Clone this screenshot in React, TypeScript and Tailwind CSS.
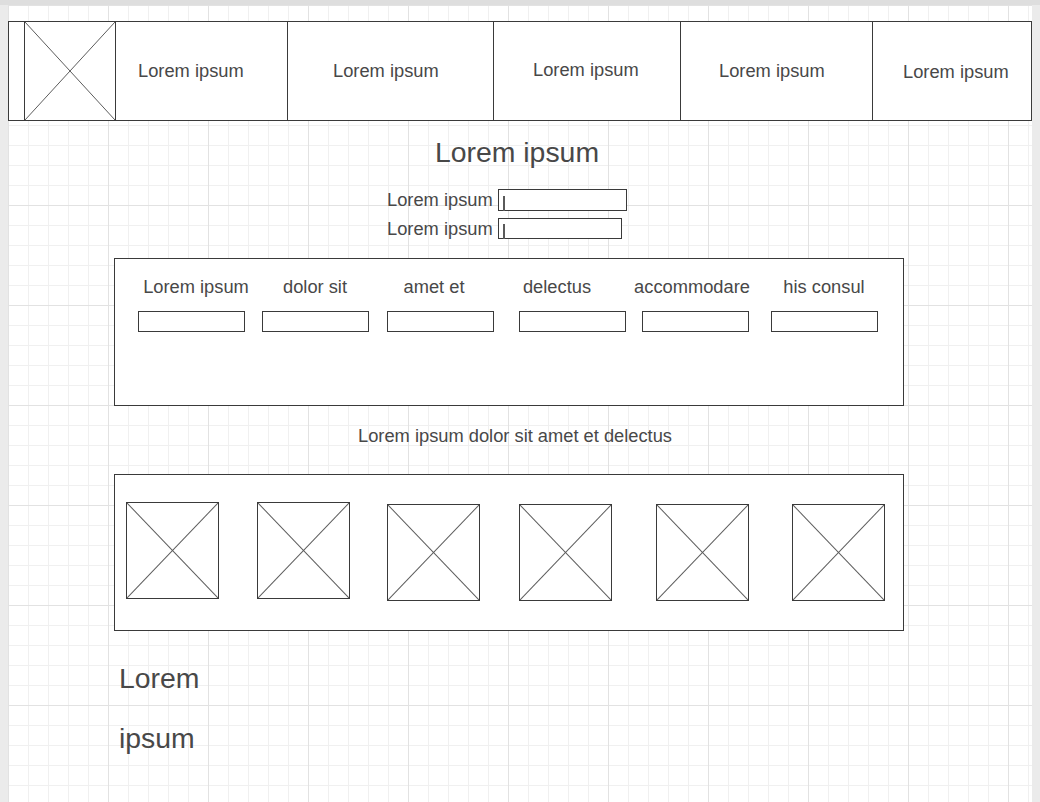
import React from 'react';

const navItems = [
  { label: 'Lorem ipsum', w: 'w-[172px]', pad: 'pl-[22px]' },
  { label: 'Lorem ipsum', w: 'w-[206px]', pad: 'pl-[45px]' },
  { label: 'Lorem ipsum', w: 'w-[187px]', pad: 'pl-[39px] pb-[2px]' },
  { label: 'Lorem ipsum', w: 'w-[192px]', pad: 'pl-[38px]' },
];

const columns = [
  { label: 'Lorem ipsum', lm: 'ml-[23px]', im: 'ml-[23px]' },
  { label: 'dolor sit', lm: 'ml-[3px]', im: 'ml-[17px]' },
  { label: 'amet et', lm: 'ml-[3px]', im: 'ml-[18px]' },
  { label: 'delectus', lm: 'ml-[7px]', im: 'ml-[25px]' },
  { label: 'accommodare', lm: 'ml-[19px]', im: 'ml-[16px]' },
  { label: 'his consul', lm: 'ml-[16px]', im: 'ml-[22px]' },
];

const pictures = [
  'ml-[11px] mt-[27px]',
  'ml-[38px] mt-[27px]',
  'ml-[37px] mt-[29px]',
  'ml-[39px] mt-[29px]',
  'ml-[44px] mt-[29px]',
  'ml-[43px] mt-[29px]',
];

// croix du placeholder d'image
const Cross = () => (
  <svg className="w-full h-full block" viewBox="0 0 100 100" preserveAspectRatio="none">
    <line x1="0" y1="0" x2="100" y2="100" stroke="#5c5c5c" strokeWidth="1" vectorEffect="non-scaling-stroke" />
    <line x1="100" y1="0" x2="0" y2="100" stroke="#5c5c5c" strokeWidth="1" vectorEffect="non-scaling-stroke" />
  </svg>
);

const Field = ({ w, h }: { w: string; h: string }) => (
  <div className={`${w} ${h} border border-[#3a3a3a] bg-white flex items-end pl-[4px] shrink-0`}>
    <span className="w-[2px] h-[15px] bg-[#5a5a5a] translate-y-[1px]" />
  </div>
);

const App = () => {
  return (
    <div className="min-h-screen bg-[#ebebeb] font-['Liberation_Sans',Arial,sans-serif] text-[#484848]">
      <div className="h-[5px] bg-[#dedede]" />
      <div className="ml-[8px] w-[1024px] min-h-[797px] bg-white [background-image:linear-gradient(to_right,#e2e2e2_1px,transparent_1px),linear-gradient(to_bottom,#e2e2e2_1px,transparent_1px),linear-gradient(to_right,#f0f0f0_1px,transparent_1px),linear-gradient(to_bottom,#f0f0f0_1px,transparent_1px)] [background-size:100px_100px,100px_100px,20px_20px,20px_20px] overflow-hidden">
        {/* Barre de navigation */}
        <div className="mt-4 h-[100px] flex border border-[#3a3a3a] bg-white">
          <div className="w-[16px] border-r border-[#3a3a3a] shrink-0" />
          <div className="w-[91px] border-r border-[#3a3a3a] shrink-0">
            <Cross />
          </div>
          {navItems.map((item, i) => (
            <div
              key={i}
              className={`${item.w} ${item.pad} border-r border-[#3a3a3a] shrink-0 flex items-center text-[18.3px] leading-[22px] whitespace-nowrap`}
            >
              {item.label}
            </div>
          ))}
          <div className="flex-1 pl-[30px] pt-[2px] flex items-center text-[18.3px] leading-[22px] whitespace-nowrap">
            Lorem ipsum
          </div>
        </div>

        {/* Titre */}
        <div className="mt-[15px] pr-[6px] text-center text-[28.4px] leading-[32px]">Lorem ipsum</div>

        {/* Formulaire */}
        <div className="mt-[21px] ml-[379px] flex flex-col gap-[7px]">
          <div className="flex items-center h-[22px]">
            <span className="w-[106px] text-[18.3px] leading-[22px] whitespace-nowrap">Lorem ipsum</span>
            <div className="ml-[5px]">
              <Field w="w-[129px]" h="h-[22px]" />
            </div>
          </div>
          <div className="flex items-center h-[21px]">
            <span className="w-[106px] text-[18.3px] leading-[22px] whitespace-nowrap">Lorem ipsum</span>
            <div className="ml-[5px]">
              <Field w="w-[124px]" h="h-[21px]" />
            </div>
          </div>
        </div>

        {/* Tableau des champs */}
        <div className="mt-[19px] ml-[106px] w-[790px] h-[148px] border border-[#3a3a3a] bg-white pt-[17px]">
          <div className="flex">
            {columns.map((c, i) => (
              <div key={i} className={`${c.lm} w-[116px] shrink-0 text-center text-[18.3px] leading-[22px] whitespace-nowrap`}>
                {c.label}
              </div>
            ))}
          </div>
          <div className="flex mt-[13px]">
            {columns.map((c, i) => (
              <div key={i} className={`${c.im} w-[107px] h-[21px] shrink-0 border border-[#3a3a3a] bg-white`} />
            ))}
          </div>
        </div>

        <div className="mt-[19px] pr-[10px] text-center text-[18.3px] leading-[22px]">
          Lorem ipsum dolor sit amet et delectus
        </div>

        {/* Galerie */}
        <div className="mt-[27px] ml-[106px] w-[790px] h-[157px] border border-[#3a3a3a] bg-white flex items-start">
          {pictures.map((p, i) => (
            <div key={i} className={`${p} w-[93px] h-[97px] shrink-0 border border-[#3a3a3a]`}>
              <Cross />
            </div>
          ))}
        </div>

        <div className="mt-[31px] ml-[111px] text-[28.4px] leading-[32px]">Lorem</div>
        <div className="mt-[28px] ml-[111px] text-[28.4px] leading-[32px]">ipsum</div>
      </div>
    </div>
  );
};

export default App;
